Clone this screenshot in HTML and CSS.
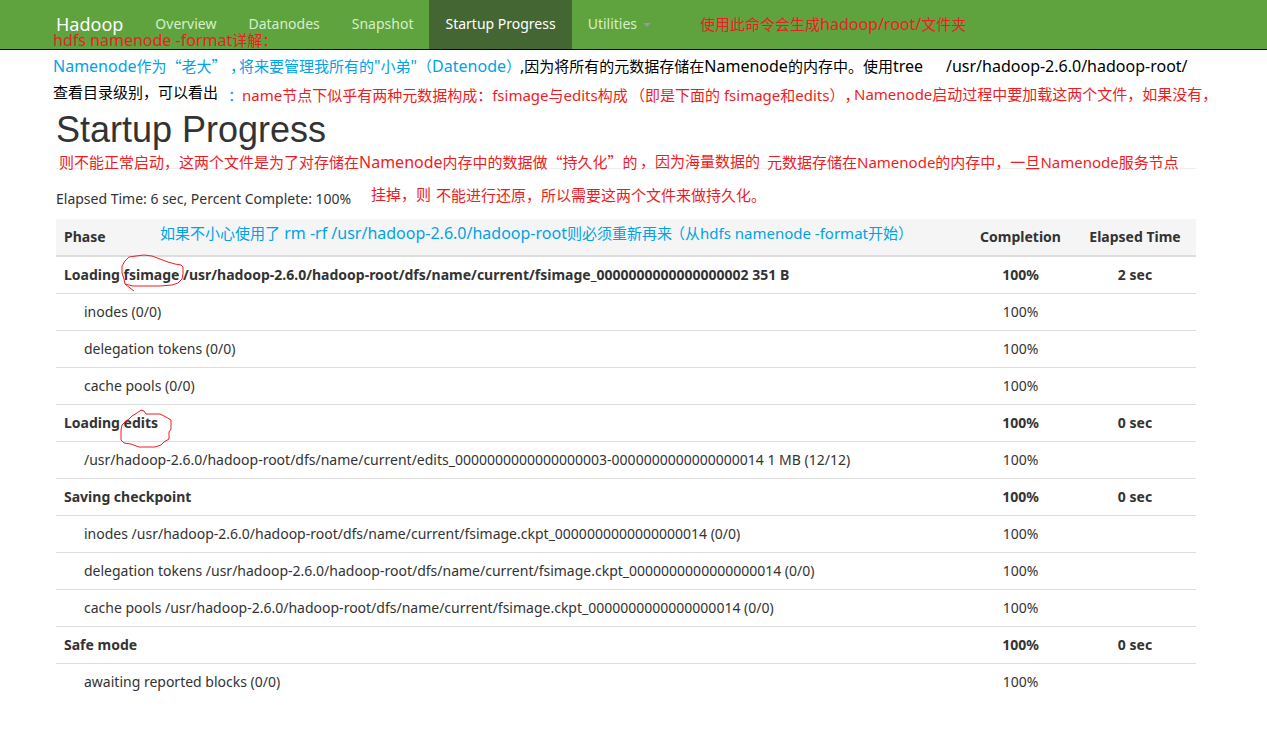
FILE: index.html
```html
<!DOCTYPE html>
<html lang="zh-CN">
<head>
<meta charset="utf-8">
<title>Startup Progress</title>
<link rel="stylesheet" href="styles.css">
</head>
<body>
<header class="navbar">
  <div class="container navbar-inner">
    <a class="brand" href="#">Hadoop</a>
    <nav>
      <ul class="nav">
        <li><a href="#">Overview</a></li>
        <li><a href="#">Datanodes</a></li>
        <li><a href="#">Snapshot</a></li>
        <li><a class="active" href="#">Startup Progress</a></li>
        <li><a href="#">Utilities <span class="caret"></span></a></li>
      </ul>
    </nav>
  </div>
</header>

<main class="container">
  <div class="page-header"><h1>Startup Progress</h1></div>
  <p class="summary">Elapsed Time: 6 sec, Percent Complete: 100%</p>
  <table class="progress">
    <thead>
      <tr><th>Phase</th><th class="completion">Completion</th><th class="elapsed">Elapsed Time</th></tr>
    </thead>
    <tbody>
      <tr class="phase"><td>Loading fsimage /usr/hadoop-2.6.0/hadoop-root/dfs/name/current/fsimage_0000000000000000002 351 B</td><td>100%</td><td>2 sec</td></tr>
      <tr class="step"><td>inodes (0/0)</td><td>100%</td><td></td></tr>
      <tr class="step"><td>delegation tokens (0/0)</td><td>100%</td><td></td></tr>
      <tr class="step"><td>cache pools (0/0)</td><td>100%</td><td></td></tr>
      <tr class="phase"><td>Loading edits</td><td>100%</td><td>0 sec</td></tr>
      <tr class="step"><td>/usr/hadoop-2.6.0/hadoop-root/dfs/name/current/edits_0000000000000000003-0000000000000000014 1 MB (12/12)</td><td>100%</td><td></td></tr>
      <tr class="phase"><td>Saving checkpoint</td><td>100%</td><td>0 sec</td></tr>
      <tr class="step"><td>inodes /usr/hadoop-2.6.0/hadoop-root/dfs/name/current/fsimage.ckpt_0000000000000000014 (0/0)</td><td>100%</td><td></td></tr>
      <tr class="step"><td>delegation tokens /usr/hadoop-2.6.0/hadoop-root/dfs/name/current/fsimage.ckpt_0000000000000000014 (0/0)</td><td>100%</td><td></td></tr>
      <tr class="step"><td>cache pools /usr/hadoop-2.6.0/hadoop-root/dfs/name/current/fsimage.ckpt_0000000000000000014 (0/0)</td><td>100%</td><td></td></tr>
      <tr class="phase"><td>Safe mode</td><td>100%</td><td>0 sec</td></tr>
      <tr class="step"><td>awaiting reported blocks (0/0)</td><td>100%</td><td></td></tr>
    </tbody>
  </table>
</main>

<div class="notes">
  <div class="container notes-inner">
    <span class="note red n-format"><span>hdfs namenode -format</span>详解：</span>
    <span class="note red n-folder">使用此命令会生成<span>hadoop/root/</span>文件夹</span>
    <span class="note blue n-boss"><span>Namenode</span>作为“老大” ，</span>
    <span class="note blue n-manage">将来要管理我所有的<span>"</span>小弟<span>"</span>（<span>Datenode</span>）</span>
    <span class="note black n-memory"><span>,</span>因为将所有的元数据存储在<span>Namenode</span>的内存中。使用<span>tree</span></span>
    <span class="note black n-path"><span>/usr/hadoop-2.6.0/hadoop-root/</span></span>
    <span class="note black n-view">查看目录级别，可以看出</span>
    <span class="note blue n-colon">：</span>
    <span class="note red small n-name"><span>name</span>节点下似乎有两种元数据构成：<span>fsimage</span>与<span>edits</span>构成</span>
    <span class="note red small n-below">（即是下面的<span> fsimage</span>和<span>edits</span>），</span>
    <span class="note red small n-start"><span>Namenode</span>启动过程中要加载这两个文件，如果没有，</span>
    <span class="note red n-persist">则不能正常启动，这两个文件是为了对存储在<span>Namenode</span>内存中的数据做“持久化”的</span>
    <span class="note red n-mass">，因为海量数据的</span>
    <span class="note red small n-meta">元数据存储在<span>Namenode</span>的内存中，一旦<span>Namenode</span>服务节点</span>
    <span class="note red n-down">挂掉，则</span>
    <span class="note red n-restore">不能进行还原，所以需要这两个文件来做持久化。</span>
    <span class="note blue n-careless">如果不小心使用了<span> rm -rf /usr/hadoop-2.6.0/hadoop-root</span>则必须重新再来</span>
    <span class="note blue small n-again">（从<span>hdfs namenode -format</span>开始）</span>
    <svg class="ring ring-fsimage" width="64" height="38" viewBox="0 0 64 38" aria-hidden="true"><path d="M13 37 L9 34 L4 30 L3 25 L1 19 L1 12 L4 7 L8 3 L15 2 L23 1 L31 2 L39 5 L47 8 L54 10 L60 11 L62 13 L62 20 L61 25 L57 29 L51 31 L39 32 L12 32 L4 30"/></svg>
    <svg class="ring ring-edits" width="54" height="40" viewBox="0 0 54 40" aria-hidden="true"><path d="M9 10 L12 7 L17 4 L21 1 L24 2 L26 5 L40 5 L46 8 L51 11 L51 20 L49 23 L49 30 L44 33 L41 36 L35 38 L19 38 L11 35 L4 34 L1 31 L1 21 L2 16 L6 12 Z"/></svg>
  </div>
</div>
</body>
</html>
```

FILE: styles.css
```css
* { box-sizing: border-box; }

body {
  position: relative;
  margin: 0;
  padding-right: 15px;
  background: #fff;
  color: #333;
  font: 14px/20px "Noto Sans", "Noto Sans CJK SC", sans-serif;
}

.container {
  max-width: 1170px;
  margin: 0 auto;
  padding: 0 15px;
}

/* Navigation */
.navbar {
  margin-right: -15px;
  padding-right: 15px;
  background: #5fa33e;
  border-bottom: 1px solid #080808;
}

.navbar-inner {
  display: flex;
}

.navbar a {
  display: block;
  padding: 14px 16px 15px;
  color: #d6efcb;
  text-decoration: none;
}

.navbar .brand {
  padding-left: 0;
  color: #fff;
  font-size: 18px;
}

.nav {
  display: flex;
  margin: 0;
  padding: 0;
  list-style: none;
}

.navbar .active {
  background: #446633;
  color: #fff;
}

.caret {
  display: inline-block;
  margin-left: 2px;
  border: 4px solid transparent;
  border-top-color: #999;
  border-bottom: 0;
  vertical-align: middle;
}

/* Content */
.page-header {
  margin: 60px 0 20px;
  padding-bottom: 18px;
  border-bottom: 1px solid #eee;
}

h1 {
  margin: 0;
  font: 36px/40px "Liberation Sans", Arial, sans-serif;
}

.summary {
  margin: 0 0 10px;
}

.progress {
  width: 100%;
  border-collapse: collapse;
}

.progress th,
.progress td {
  padding: 8px;
  text-align: center;
}

.progress th:first-child,
.progress td:first-child {
  text-align: left;
}

.progress th {
  background: #f5f5f5;
  border-bottom: 2px solid #ddd;
}

.progress .completion { width: 107px; }
.progress .elapsed { width: 122px; }

.progress tr + tr td {
  border-top: 1px solid #ddd;
}

.phase { font-weight: bold; }

.progress .step td:first-child { padding-left: 28px; }

/* Handwritten notes laid over the page */
.notes {
  position: absolute;
  top: 0;
  left: 0;
  right: 15px;
  pointer-events: none;
}

.notes-inner { position: relative; }

.note {
  position: absolute;
  white-space: pre;
  font: 15px/20px "Noto Sans CJK SC", sans-serif;
  text-spacing-trim: space-all;
}

.note span {
  font-family: "Noto Sans", sans-serif;
  font-size: 16px;
}

.small span { font-size: 15px; }

.red { color: #ed1c24; }
.blue { color: #00a2e8; }
.black { color: #000; }

.n-format { left: 12px; top: 30px; }
.n-folder { left: 659px; top: 14px; }
.n-boss { left: 12px; top: 56px; }
.n-manage { left: 198px; top: 56px; }
.n-memory { left: 479px; top: 56px; }
.n-path { left: 905px; top: 56px; }
.n-view { left: 12px; top: 82px; }
.n-colon { left: 187px; top: 85px; }
.n-name { left: 201px; top: 85px; }
.n-below { left: 589px; top: 85px; }
.n-start { left: 813px; top: 84px; }
.n-persist { left: 18px; top: 152px; }
.n-mass { left: 599px; top: 151px; }
.n-meta { left: 726px; top: 152px; }
.n-down { left: 330px; top: 184px; }
.n-restore { left: 395px; top: 185px; }
.n-careless { left: 119px; top: 223px; }
.n-again { left: 629px; top: 223px; }

.ring {
  position: absolute;
  fill: none;
  stroke: #ed1c24;
}

.ring-fsimage { left: 80px; top: 254px; }
.ring-edits { left: 79px; top: 409px; }
```
